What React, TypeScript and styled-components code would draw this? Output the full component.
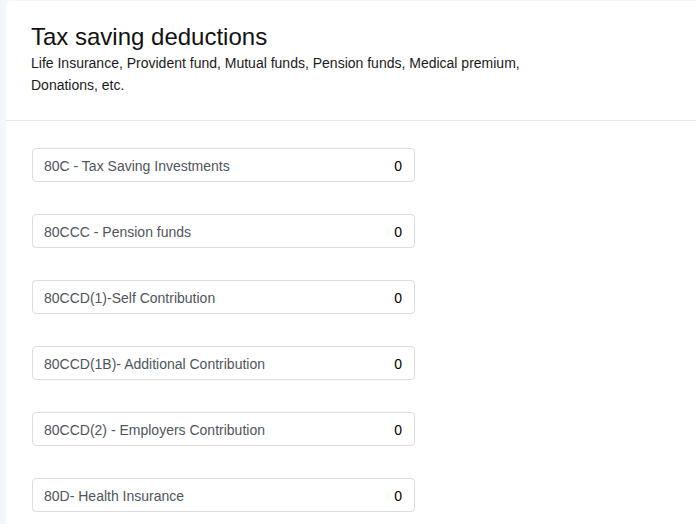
import React from "react";
import styled, { createGlobalStyle } from "styled-components";

const GlobalStyle = createGlobalStyle`
  html, body {
    margin: 0;
    padding: 0;
    background-color: #f3f6fa;
    overflow: hidden;
  }
  body {
    font-family: "Liberation Sans", Arial, sans-serif;
  }
`;

const Page = styled.div`
  box-sizing: border-box;
  padding: 1px 0 0 6px;
  height: 524px;
  overflow: hidden;
`;

const Card = styled.div`
  width: 720px;
  height: 100%;
  background-color: #ffffff;
  border-radius: 5px 0 0 0;
`;

const CardHeader = styled.div`
  padding: 21px 25px 24px;
  border-bottom: 1px solid #e6e8ec;
`;

const Title = styled.h3`
  margin: 0 0 1px;
  font-size: 24px;
  font-weight: 400;
  line-height: 29px;
  color: #111111;
`;

const Subtitle = styled.p`
  margin: 0;
  max-width: 540px;
  font-size: 14px;
  line-height: 22px;
  color: #1a1a1a;
`;

const CardBody = styled.div`
  padding: 27px 26px;
  display: flex;
  flex-direction: column;
  gap: 32px;
`;

const Field = styled.div`
  box-sizing: border-box;
  width: 383px;
  height: 34px;
  padding: 2px 12px 0 11px;
  display: flex;
  align-items: center;
  justify-content: space-between;
  border: 1px solid #d9dce0;
  border-radius: 4px;
  font-size: 14px;
`;

const Label = styled.span`
  color: #4f555b;
`;

const Value = styled.span`
  color: #000000;
`;

const deductions = [
  { label: "80C - Tax Saving Investments", value: 0 },
  { label: "80CCC - Pension funds", value: 0 },
  { label: "80CCD(1)-Self Contribution", value: 0 },
  { label: "80CCD(1B)- Additional Contribution", value: 0 },
  { label: "80CCD(2) - Employers Contribution", value: 0 },
  { label: "80D- Health Insurance", value: 0 },
];

export default function App() {
  return (
    <>
      <GlobalStyle />
      <Page>
        <Card>
          <CardHeader>
            <Title>Tax saving deductions</Title>
            <Subtitle>
              Life Insurance, Provident fund, Mutual funds, Pension funds,
              Medical premium, Donations, etc.
            </Subtitle>
          </CardHeader>
          <CardBody>
            {deductions.map((d) => (
              <Field key={d.label}>
                <Label>{d.label}</Label>
                <Value>{d.value}</Value>
              </Field>
            ))}
          </CardBody>
        </Card>
      </Page>
    </>
  );
}
